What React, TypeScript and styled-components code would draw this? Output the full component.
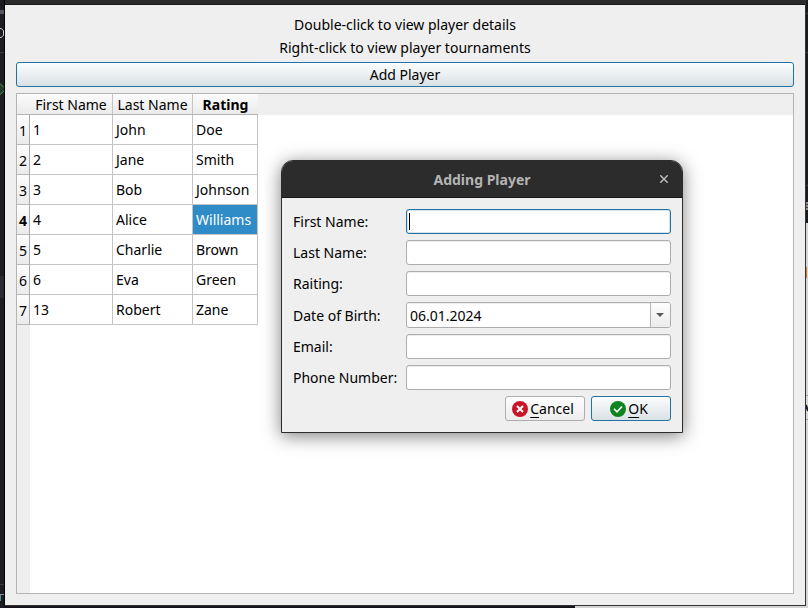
import React from "react";
import styled, { createGlobalStyle, css } from "styled-components";

const font = `"Noto Sans", "Open Sans", sans-serif`;
const lineGrey = "#b4b4b4";
const accent = "#1f72a3";

const GlobalStyle = createGlobalStyle`
  *, *::before, *::after { box-sizing: border-box; }
  body { margin: 0; font: 14px/17px ${font}; color: #000; background: #1c1d21; }
  button, input { font: inherit; color: inherit; }
`;

const Desktop = styled.div`
  min-height: 100vh;
  display: grid;
  grid-template-columns: 4px minmax(0, 1fr) 2px;
  grid-template-rows: minmax(0, 1fr) 2px;
  position: relative;
`;

const LeftStrip = styled.svg`
  grid-row: 1 / 3;
  width: 4px;
  height: 100%;
  background: #1c1d21;
`;

const RightStrip = styled.svg`
  grid-column: 3;
  grid-row: 1 / 3;
  width: 2px;
  height: 100%;
  background: #d6d6d6;
`;

const BottomStrip = styled.div`
  grid-column: 2;
  grid-row: 2;
  background: linear-gradient(to right, #17141c 571px, #d3d3d3 571px);
`;

const AppWindow = styled.main`
  display: flex;
  flex-direction: column;
  border: 1px solid #333;
  border-left-color: #000;
  border-top: 0;
  background: #efefef;
`;

const WindowEdge = styled.div`
  height: 5px;
  background: #2b2b2b;
  border-bottom: 1px solid #1a1a1a;
`;

const WindowBody = styled.div`
  flex: 1;
  display: flex;
  flex-direction: column;
  gap: 6px;
  padding: 11px;
`;

const Hint = styled.p`
  margin: 0;
  text-align: center;
`;

const PushButton = styled.button<{ $primary?: boolean; $withIcon?: boolean }>`
  height: 25px;
  min-width: 80px;
  padding: ${(p) => (p.$withIcon ? "0 10px 0 6px" : "0 6px")};
  display: flex;
  align-items: center;
  justify-content: center;
  gap: 2px;
  border-radius: 3px;
  border: 1px solid #adadad;
  background: linear-gradient(#fefefe, #ececec);
  ${(p) =>
    p.$primary &&
    css`
      border-color: ${accent};
      background: linear-gradient(#fcfdfd, #d9e1e5);
    `}
`;

const TableFrame = styled.div`
  flex: 1;
  border: 1px solid ${lineGrey};
  background:
    linear-gradient(#efefef, #efefef) 0 0 / 100% 21px no-repeat,
    linear-gradient(#efefef, #efefef) 0 0 / 13px 100% no-repeat,
    #fff;
`;

const Table = styled.table`
  width: 241px;
  table-layout: fixed;
  border-collapse: separate;
  border-spacing: 0;
`;

const Col = styled.col<{ $w: number }>`
  width: ${(p) => p.$w}px;
`;

const HeadCell = styled.th<{ $active?: boolean; $open?: boolean }>`
  height: 21px;
  padding: 0;
  font-weight: ${(p) => (p.$active ? 700 : 400)};
  white-space: nowrap;
  border-bottom: 1px solid ${lineGrey};
  border-right: ${(p) => (p.$open ? "0" : "1px solid #c4c4c4")};
  background: linear-gradient(#fbfbfb, #ebebeb);
`;

const CornerCell = styled.td`
  padding: 0;
  border-bottom: 1px solid ${lineGrey};
  background: linear-gradient(#fbfbfb, #ebebeb);
`;

const RowHead = styled.th<{ $active?: boolean }>`
  height: 30px;
  padding: 2px 0 0;
  font-weight: ${(p) => (p.$active ? 700 : 400)};
  border-right: 1px solid #a8a8a8;
  border-bottom: 1px solid #b8b8b8;
  background: linear-gradient(#fdfdfd, #ebebeb);
`;

const Cell = styled.td<{ $selected?: boolean }>`
  padding: 0 0 0 3px;
  white-space: nowrap;
  border-right: 1px solid #c4c4c4;
  border-bottom: 1px solid #c4c4c4;
  ${(p) => p.$selected && "background: #308cc6; color: #fff;"}
`;

const Dialog = styled.div`
  position: absolute;
  left: 281px;
  top: 160px;
  width: 402px;
  border: 1px solid #2c2c2c;
  border-radius: 12px 12px 0 0;
  background: #efefef;
  box-shadow: 0 3px 18px rgba(0, 0, 0, 0.5);
`;

const TitleBar = styled.header`
  height: 37px;
  display: grid;
  grid-template-columns: 36px 1fr 36px;
  align-items: center;
  border-radius: 11px 11px 0 0;
  border-bottom: 1px solid #191419;
  background: #2c2c2c;
  color: #b4b4b4;
`;

const Title = styled.h1`
  grid-column: 2;
  margin: 0;
  text-align: center;
  font-size: 14px;
  line-height: 17px;
`;

const CloseButton = styled.button`
  justify-self: center;
  display: grid;
  padding: 4px;
  border: 0;
  background: none;
`;

const Form = styled.form`
  display: grid;
  grid-template-columns: 107px minmax(0, 1fr);
  align-items: center;
  gap: 6px;
  padding: 11px;
`;

const Label = styled.label`
  white-space: nowrap;
`;

const TextBox = styled.input<{ $focused?: boolean }>`
  width: 100%;
  height: 25px;
  padding: 0 3px;
  border: 1px solid #adadad;
  border-radius: 3px;
  outline: 0;
  background: #fff;
  box-shadow: inset 0 1px 0 #ededed;
  ${(p) =>
    p.$focused &&
    css`
      border-color: ${accent};
      box-shadow: inset 0 0 0 1px #d5e4ec;
      background: linear-gradient(#000, #000) 2px 3px / 1px 17px no-repeat, #fff;
    `}
`;

const DateBox = styled.div`
  height: 26px;
  display: flex;
  overflow: hidden;
  border: 1px solid #adadad;
  border-radius: 3px;
  background: #fff;
`;

const DateInput = styled.input`
  flex: 1;
  min-width: 0;
  padding: 0 3px;
  border: 0;
  outline: 0;
  background: none;
  box-shadow: inset 0 1px 0 #ededed;
`;

const DropButton = styled.button`
  width: 20px;
  display: grid;
  place-items: center;
  padding: 0 2px 0 0;
  border: 0;
  border-left: 1px solid #b4b4b4;
  background: linear-gradient(#fdfdfd, #ececec);
`;

const Actions = styled.div`
  grid-column: 1 / 3;
  display: flex;
  justify-content: flex-end;
  gap: 6px;
`;

const Mnemonic = styled.span`
  text-decoration: underline;
  text-underline-offset: 3px;
`;

const players = [
  ["1", "John", "Doe"],
  ["2", "Jane", "Smith"],
  ["3", "Bob", "Johnson"],
  ["4", "Alice", "Williams"],
  ["5", "Charlie", "Brown"],
  ["6", "Eva", "Green"],
  ["13", "Robert", "Zane"],
];

const CancelIcon = () => (
  <svg width="16" height="16" viewBox="0 0 16 16" aria-hidden="true">
    <circle cx="8" cy="8" r="8" fill="#c7162b" />
    <path d="M5 5l6 6M11 5l-6 6" stroke="#fff" strokeWidth="2" />
  </svg>
);

const OkIcon = () => (
  <svg width="16" height="16" viewBox="0 0 16 16" aria-hidden="true">
    <circle cx="8" cy="8" r="8" fill="#0e8420" />
    <path d="M4 7.8l3 3 5-5.3" fill="none" stroke="#fff" strokeWidth="1.6" />
  </svg>
);

const DesktopLeft = () => (
  <LeftStrip aria-hidden="true">
    <rect y="10" width="4" height="4" fill="#55555f" />
    <path d="M0 28.5h1l2.5 2v5L1 37.5H0" fill="none" stroke="#c9c9cc" />
    <path d="M0 52.5h4M0 584.5h4" stroke="#3b3c42" />
    <path d="M0 83l4 4v4l-4 4z" fill="#263a2b" />
    <path d="M0 83.5l4 4M4 91l-4 3.5" stroke="#4f8f57" />
    <rect y="276" width="4" height="22" fill="#292b31" />
    <path d="M0 594.5h4" stroke="#8e9297" />
    <path d="M.5 595v6" stroke="#528b9b" />
  </LeftStrip>
);

const DesktopRight = () => (
  <RightStrip aria-hidden="true">
    <rect width="2" height="223" fill="#191b1c" />
    <path d="M0 13.5h2M0 52.5h2M0 185.5h2" stroke="#3b3c3e" />
    <rect y="202" width="2" height="8" fill="#8e9297" />
    <path d="M0 204.5h2M0 207.5h2" stroke="#4a3a38" />
    <path d="M0 268l1 -2v12h-1z" fill="#f57900" />
    <path d="M0 395.5h2M0 419.5h2" stroke="#a0a0a0" />
    <path d="M0 405l2 6" stroke="#16202c" strokeWidth="2" />
  </RightStrip>
);

const fieldsBefore = [
  ["first", "First Name:"],
  ["last", "Last Name:"],
  ["rating", "Raiting:"],
];
const fieldsAfter = [
  ["email", "Email:"],
  ["phone", "Phone Number:"],
];

function Field({ id, label, focused }: { id: string; label: string; focused?: boolean }) {
  return (
    <>
      <Label htmlFor={id}>{label}</Label>
      <TextBox id={id} type="text" $focused={focused} />
    </>
  );
}

function AddPlayerDialog() {
  return (
    <Dialog role="dialog" aria-labelledby="dialog-title">
      <TitleBar>
        <Title id="dialog-title">Adding Player</Title>
        <CloseButton type="button" aria-label="Close">
          <svg width="8" height="8" viewBox="0 0 8 8" aria-hidden="true">
            <path d="M.3.3l7.400 7.400M7.700.3l-7.400 7.400" stroke="#c0c0c0" strokeWidth="1.4" />
          </svg>
        </CloseButton>
      </TitleBar>
      <Form onSubmit={(e) => e.preventDefault()}>
        {fieldsBefore.map(([id, label]) => (
          <Field key={id} id={id} label={label} focused={id === "first"} />
        ))}
        <Label htmlFor="birth">Date of Birth:</Label>
        <DateBox>
          <DateInput id="birth" type="text" defaultValue="06.01.2024" />
          <DropButton type="button" aria-label="Open calendar">
            <svg width="8" height="4" viewBox="0 0 8 4" aria-hidden="true">
              <path d="M0 0h8L4 4z" fill="#5a5a5a" />
            </svg>
          </DropButton>
        </DateBox>
        {fieldsAfter.map(([id, label]) => (
          <Field key={id} id={id} label={label} />
        ))}
        <Actions>
          <PushButton type="button" $withIcon>
            <CancelIcon />
            <span>
              <Mnemonic>C</Mnemonic>ancel
            </span>
          </PushButton>
          <PushButton type="submit" $primary $withIcon>
            <OkIcon />
            <span>
              <Mnemonic>O</Mnemonic>K
            </span>
          </PushButton>
        </Actions>
      </Form>
    </Dialog>
  );
}

export default function App() {
  return (
    <Desktop>
      <GlobalStyle />
      <DesktopLeft />
      <AppWindow>
        <WindowEdge />
        <WindowBody>
          <Hint>Double-click to view player details</Hint>
          <Hint>Right-click to view player tournaments</Hint>
          <PushButton type="button" $primary>
            Add Player
          </PushButton>
          <TableFrame>
            <Table>
              <colgroup>
                <Col $w={13} />
                <Col $w={83} />
                <Col $w={80} />
                <Col $w={65} />
              </colgroup>
              <thead>
                <tr>
                  <CornerCell />
                  <HeadCell scope="col">First Name</HeadCell>
                  <HeadCell scope="col">Last Name</HeadCell>
                  <HeadCell scope="col" $active $open>
                    Rating
                  </HeadCell>
                </tr>
              </thead>
              <tbody>
                {players.map((row, r) => (
                  <tr key={row[0]}>
                    <RowHead scope="row" $active={r === 3}>
                      {r + 1}
                    </RowHead>
                    {row.map((value, c) => (
                      <Cell key={c} $selected={r === 3 && c === 2}>
                        {value}
                      </Cell>
                    ))}
                  </tr>
                ))}
              </tbody>
            </Table>
          </TableFrame>
        </WindowBody>
      </AppWindow>
      <DesktopRight />
      <BottomStrip />
      <AddPlayerDialog />
    </Desktop>
  );
}
